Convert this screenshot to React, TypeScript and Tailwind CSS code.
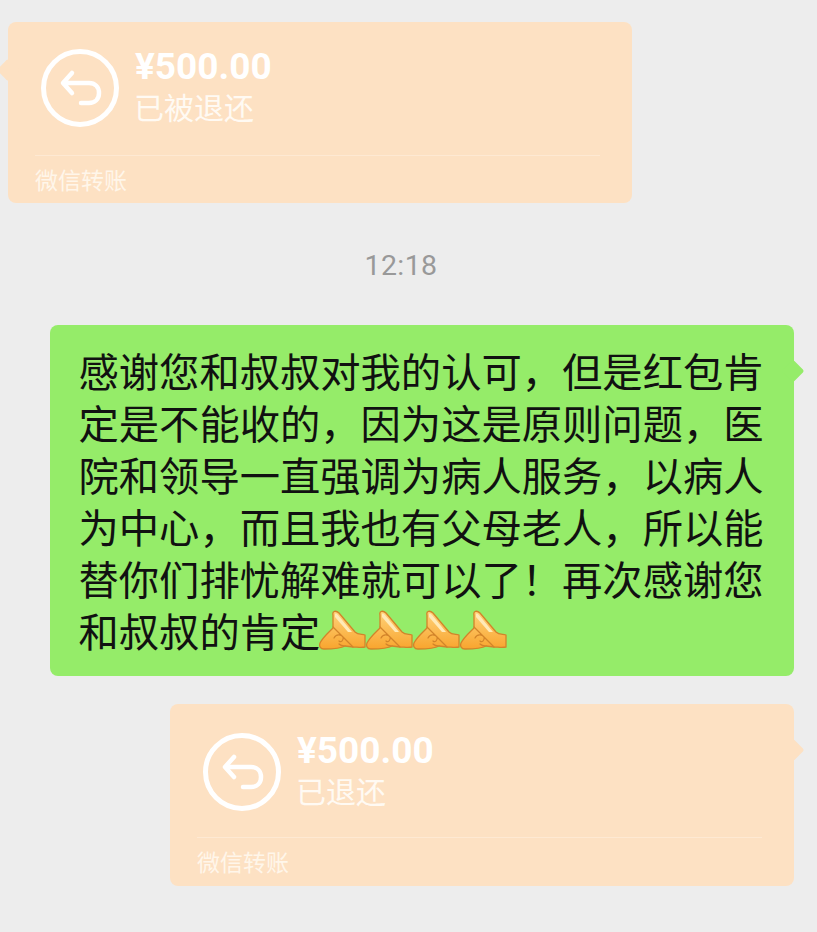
const cjk = '[font-family:"Noto_Sans_CJK_SC","Noto_Sans",sans-serif]';

const lines = [
  '感谢您和叔叔对我的认可，但是红包肯',
  '定是不能收的，因为这是原则问题，医',
  '院和领导一直强调为病人服务，以病人',
  '为中心，而且我也有父母老人，所以能',
  '替你们排忧解难就可以了！再次感谢您',
];

function PalmsIcon() {
  return (
    <svg width="47" height="40" viewBox="0 0 47 40" className="shrink-0">
      <defs>
        <linearGradient id="palm" x1="0" y1="0" x2="0" y2="1">
          <stop offset="0" stopColor="#ffd27a" />
          <stop offset="1" stopColor="#f8a52e" />
        </linearGradient>
      </defs>
      <path
        d="M14 5 C13 1 17 0 20 3 L36 22 C39 25 43 24 46 25 L46 37 C42 38 38 37 34 37 L26 36 C21 39 10 39 5 39 C1 39 0 36 1 33 C4 27 9 23 14 18 Z"
        fill="url(#palm)"
        stroke="#d2842a"
        strokeWidth="1.3"
        strokeLinejoin="round"
      />
      <path d="M16 4 C17 3 18 4 19 5 L33 22 L29 22 L16 7 Z" fill="#ffeab8" />
      <path
        d="M14 17 C20 23 27 30 34 37 M15 28 C17 24 22 24 24 27 C25 30 22 33 20 31 M20 34 C22 36 24 36 26 36"
        fill="none"
        stroke="#d2842a"
        strokeWidth="1.2"
        strokeLinecap="round"
      />
    </svg>
  );
}

function ReturnIcon() {
  return (
    <svg width="78" height="78" viewBox="0 0 78 78" className="shrink-0">
      <circle cx="39" cy="39" r="36.5" fill="none" stroke="#fff" strokeWidth="5" />
      <path
        d="M31 24 L22 34 L31 44 M23 34 H48 C54 34 58 38 58 44 C58 50 54 54 48 54 H40"
        fill="none"
        stroke="#fff"
        strokeWidth="4.5"
        strokeLinecap="round"
        strokeLinejoin="round"
      />
    </svg>
  );
}

function TransferCard({ status, side }: { status: string; side: 'left' | 'right' }) {
  const isLeft = side === 'left';
  return (
    <div
      className={`relative w-[624px] rounded-lg bg-[#fde1c3] ${
        isLeft ? 'ml-2 h-[181px] pt-[27px]' : 'ml-[170px] h-[182px] pt-[29px]'
      }`}
    >
      {isLeft ? (
        <div className="absolute left-[-8px] top-[40px] w-4 h-4 rotate-45 rounded-[2px] bg-[#fde1c3]" />
      ) : (
        <div className="absolute right-[-7px] top-[38px] w-4 h-4 rotate-45 rounded-[2px] bg-[#fde1c3]" />
      )}
      <div className="relative flex pl-[33px] gap-[16px]">
        <ReturnIcon />
        <div className="flex flex-col text-white">
          <span className="font-['Roboto'] text-[37px] leading-[36px] font-bold">¥500.00</span>
          <span className={`${cjk} text-[30px] leading-[42px] -ml-px text-[#fffaf3]`}>{status}</span>
        </div>
      </div>
      <div className={`mx-[27px] w-[565px] border-t border-[#fee9d3] ${isLeft ? 'mt-[28px]' : 'mt-[26px]'}`} />
      <div className={`${cjk} ml-[27px] mt-[6px] text-[23px] leading-[34px] text-[#fff6ea]`}>微信转账</div>
    </div>
  );
}

export default function App() {
  return (
    <div className="h-[932px] overflow-hidden bg-[#ededed] pt-[22px]">
      <TransferCard status="已被退还" side="left" />

      <div className="mt-[43px] pr-[15px] text-center font-['Roboto'] text-[28.5px] leading-[40px] tracking-[0.4px] text-[#999999]">
        12:18
      </div>

      <div className="relative ml-[50px] mt-[39px] w-[744px] h-[351px] rounded-lg bg-[#95ec69] pl-[28.5px] pt-[19px]">
        <div className="absolute right-[-7px] top-[38px] w-4 h-4 rotate-45 rounded-[2px] bg-[#95ec69]" />
        <div className={`relative ${cjk} text-[40.3px] leading-[52px] text-[#111] whitespace-nowrap`}>
          {lines.map((line) => (
            <div key={line}>{line}</div>
          ))}
          <div className="flex items-center">
            <span className="-mr-px">和叔叔的肯定</span>
            {[0, 1, 2, 3].map((i) => (
              <PalmsIcon key={i} />
            ))}
          </div>
        </div>
      </div>

      <div className="mt-[28px]">
        <TransferCard status="已退还" side="right" />
      </div>
    </div>
  );
}
